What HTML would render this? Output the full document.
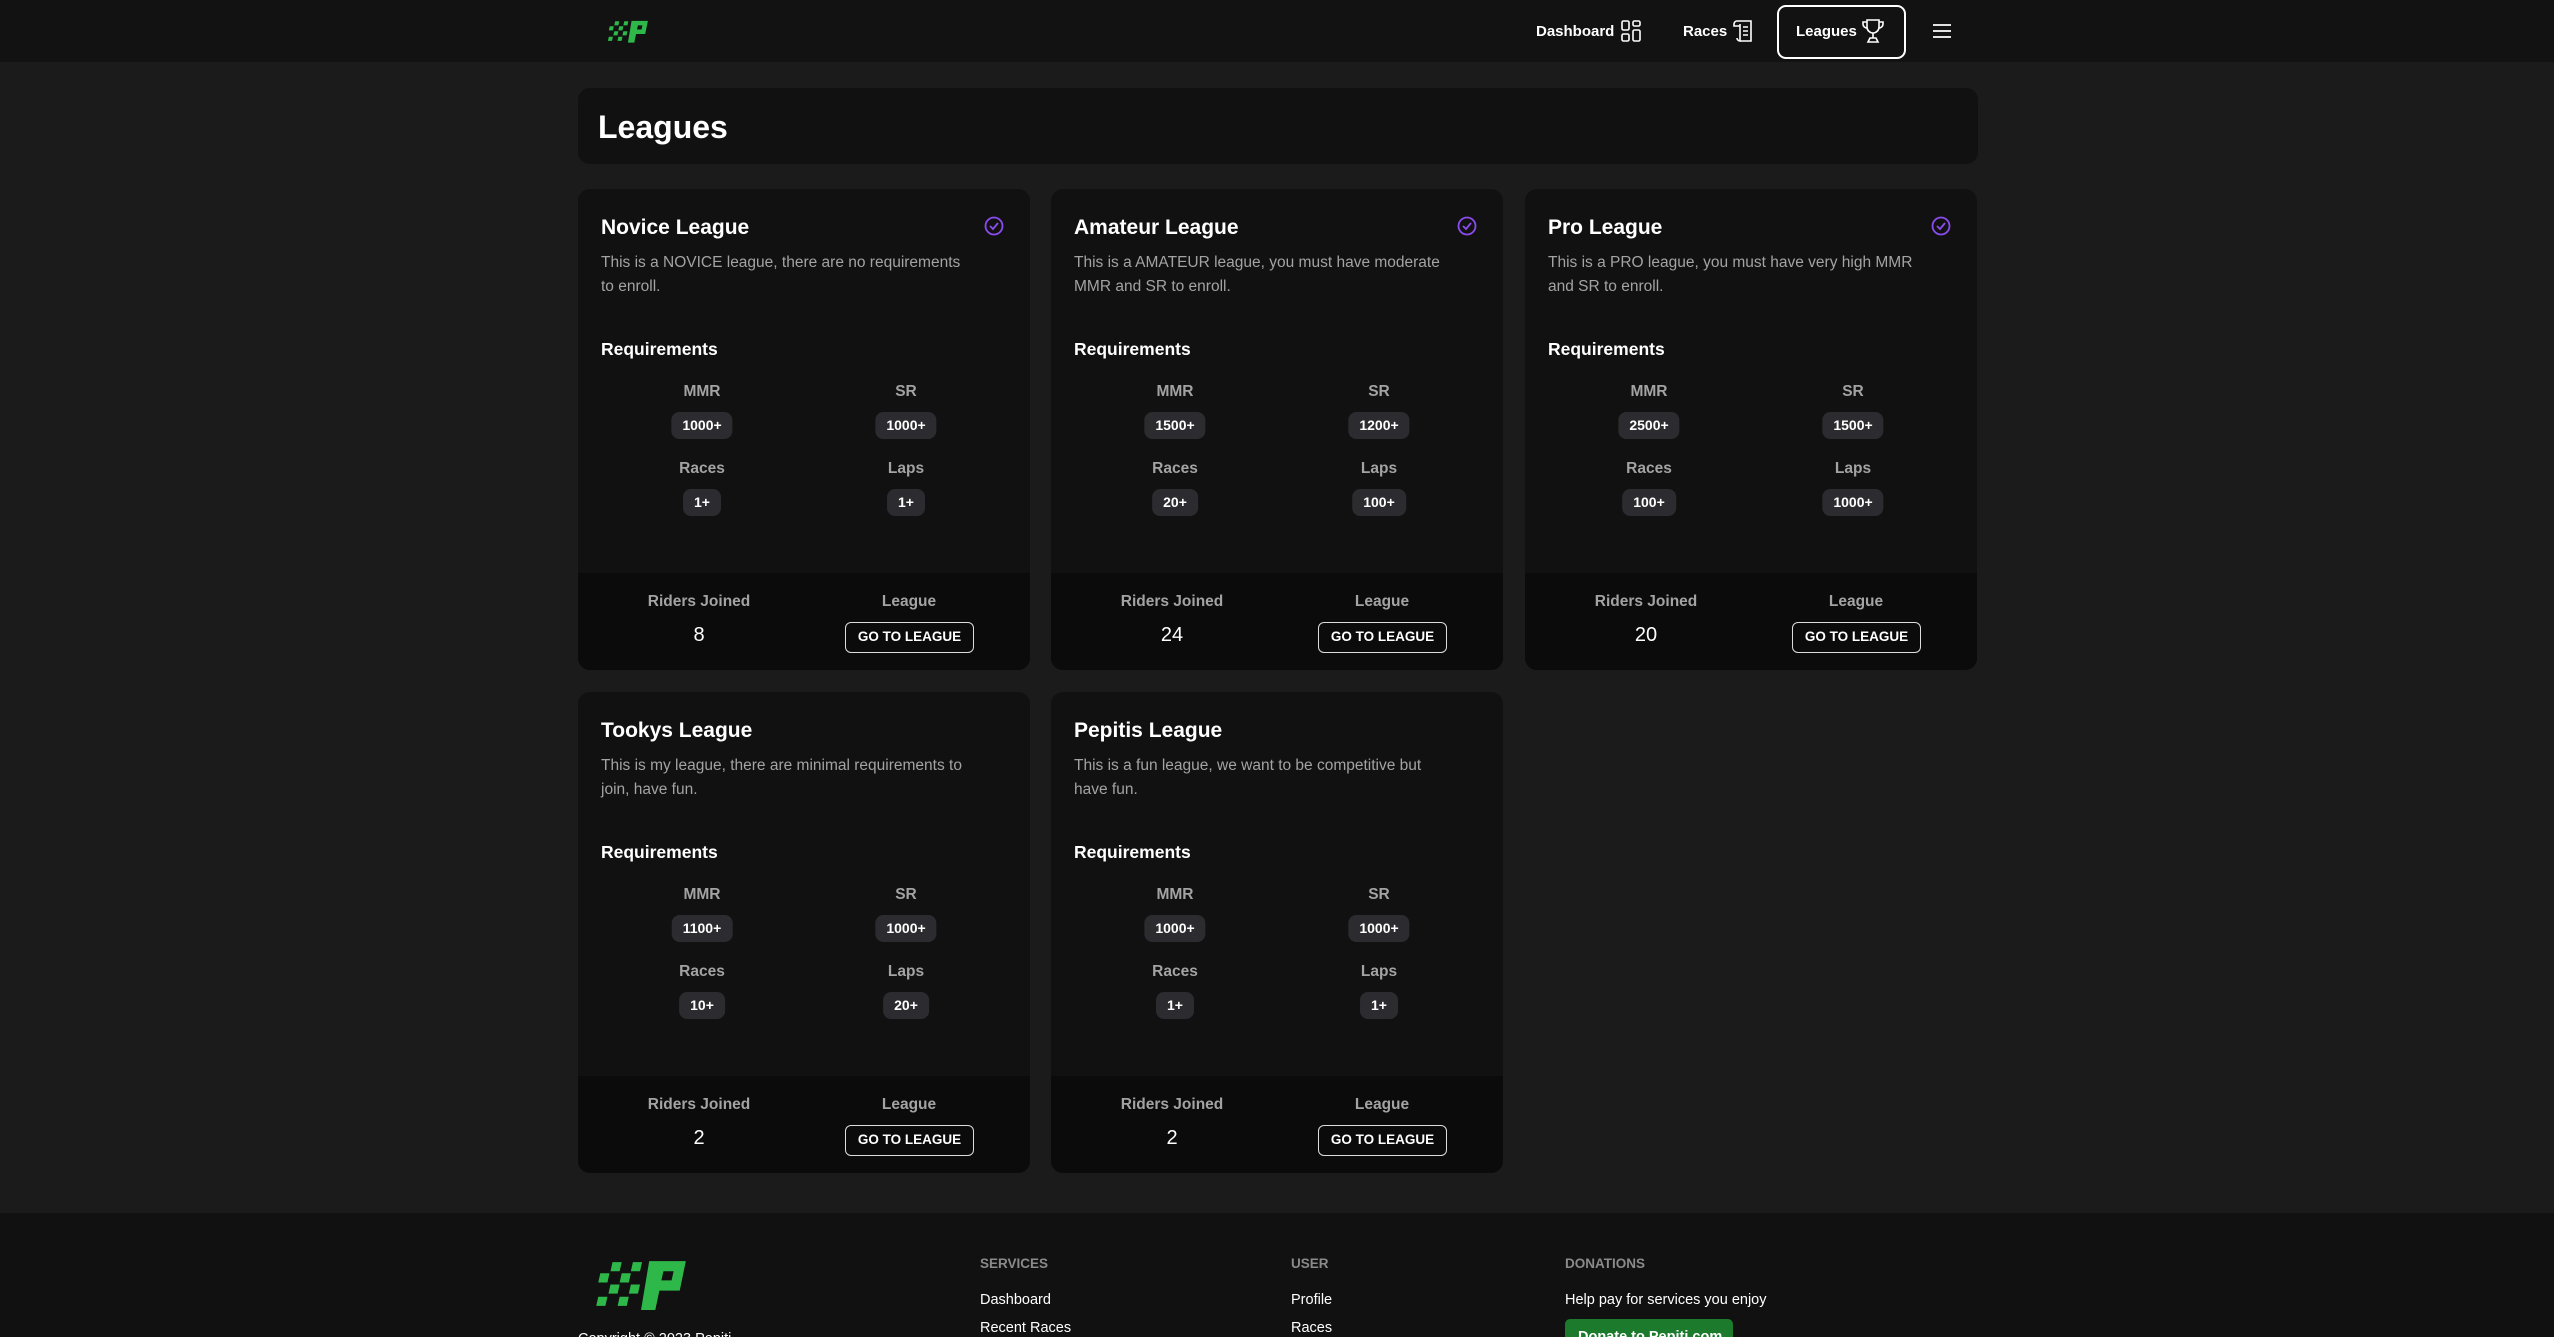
<!DOCTYPE html>
<html><head><meta charset="utf-8"><style>
*{margin:0;padding:0;box-sizing:border-box}
html,body{width:2554px;height:1337px;overflow:hidden}
body{background:#1b1b1b;font-family:"Liberation Sans",sans-serif;color:#fff;position:relative}
.abs{position:absolute}
.nav{left:0;top:0;width:2554px;height:62px;background:#121212}
.nl{font-size:15px;font-weight:bold;color:#fff}
.hdr{left:578px;top:88px;width:1400px;height:76px;background:#111;border-radius:12px}
.card{width:452px;height:481px;background:#111;border-radius:12px;overflow:hidden}
.card .ft{position:absolute;left:0;top:384px;width:100%;height:97px;background:#0b0b0b}
.t{position:absolute;left:23px;top:27px;font-size:21px;font-weight:bold}
.d{position:absolute;left:23px;top:62px;width:372px;font-size:15.5px;line-height:24px;color:#a3a3a3}
.rq{position:absolute;left:23px;top:150px;font-size:17.5px;font-weight:bold}
.lb{position:absolute;width:160px;text-align:center;font-size:15.5px;font-weight:bold;color:#a3a3a3;transform:translateX(-80px)}
.bd{position:absolute;transform:translateX(-50%);background:#2c2c30;border-radius:8px;height:27px;line-height:27px;padding:0 11px;font-size:14px;font-weight:bold}
.num{position:absolute;transform:translateX(-50%);font-size:20px}
.btn{position:absolute;left:267px;top:433px;width:129px;height:31px;border:1.5px solid #ddd;border-radius:6px;text-align:center;line-height:28px;font-size:13.5px;font-weight:bold}
.chk{position:absolute;left:405px;top:26px}
.foot{left:0;top:1213px;width:2554px;height:200px;background:#111}
.fh{font-size:13.5px;font-weight:bold;color:#8a8a8a}
.fl{font-size:14.5px;color:#fff}
</style></head><body>
<div class="abs nav"></div>
<svg class="abs" style="left:604px;top:19px" width="46" height="25" viewBox="0 0 100 55"><g fill="#2fb84a"><path fill-rule="evenodd" d="M60 4H96L90 33H70L66 52H52ZM74 14L72 23H82L84 14Z"/><path d="M24 5h9l-2 9h-9zM44 5h9l-2 9h-9zM12 16h9l-2 9h-9zM33 16h9l-2 9h-9zM22 27h9l-2 9h-9zM42 27h9l-2 9h-9zM10 39h9l-2 9h-9zM31 39h9l-2 9h-9z"/></g></svg>
<div class="abs nl" style="left:1536px;top:23px">Dashboard</div>
<svg class="abs" style="left:1621px;top:20px" width="20" height="22" viewBox="0 0 20 22" fill="none" stroke="#fff" stroke-width="1.6"><rect x="1" y="1" width="7" height="9" rx="1.5"/><rect x="12" y="1" width="7" height="5" rx="1.5"/><rect x="1" y="14" width="7" height="7" rx="1.5"/><rect x="12" y="10" width="7" height="11" rx="1.5"/></svg>
<div class="abs nl" style="left:1683px;top:23px">Races</div>
<svg class="abs" style="left:1733px;top:19px" width="22" height="24" viewBox="0 0 22 24" fill="none" stroke="#fff" stroke-width="1.6"><path d="M4 2h14v20H7"/><path d="M4 2a3 3 0 0 0-3 3v2h6"/><path d="M7 5v17a3 3 0 0 1-3-3"/><path d="M10 8h5M10 12h5M10 16h5"/></svg>
<div class="abs" style="left:1777px;top:5px;width:129px;height:54px;border:2px solid #fff;border-radius:9px"></div>
<div class="abs nl" style="left:1796px;top:23px">Leagues</div>
<svg class="abs" style="left:1862px;top:18px" width="22" height="26" viewBox="0 0 22 26" fill="none" stroke="#fff" stroke-width="1.6"><path d="M5 2h12v7a6 6 0 0 1-12 0z"/><path d="M5 4H1v2a4 4 0 0 0 4 4M17 4h4v2a4 4 0 0 1-4 4"/><path d="M11 15v5M6 24h10l-2-4H8z"/></svg>
<svg class="abs" style="left:1933px;top:23px" width="18" height="16" viewBox="0 0 18 16" stroke="#fff" stroke-width="1.8"><path d="M0 2h18M0 8h18M0 14h18"/></svg>

<div class="abs hdr"><div style="position:absolute;left:20px;top:21px;font-size:32px;font-weight:bold">Leagues</div></div>

<div class="abs card" style="left:578px;top:189px"><div class="ft"></div>
<div class="t">Novice League</div><svg class="chk" width="22" height="22" viewBox="0 0 22 22" fill="none" stroke="#8b4cf0" stroke-width="1.8"><circle cx="11" cy="11" r="8.5"/><path d="M7 11l3 3 5-6"/></svg>
<div class="d">This is a NOVICE league, there are no requirements to enroll.</div>
<div class="rq">Requirements</div>
<div class="lb" style="left:124px;top:194px">MMR</div><div class="lb" style="left:328px;top:194px">SR</div>
<div class="bd" style="left:124px;top:223px">1000+</div><div class="bd" style="left:328px;top:223px">1000+</div>
<div class="lb" style="left:124px;top:271px">Races</div><div class="lb" style="left:328px;top:271px">Laps</div>
<div class="bd" style="left:124px;top:300px">1+</div><div class="bd" style="left:328px;top:300px">1+</div>
<div class="lb" style="left:121px;top:404px">Riders Joined</div><div class="lb" style="left:331px;top:404px">League</div>
<div class="num" style="left:121px;top:435px">8</div><div class="btn">GO TO LEAGUE</div></div>

<div class="abs card" style="left:1051px;top:189px"><div class="ft"></div>
<div class="t">Amateur League</div><svg class="chk" width="22" height="22" viewBox="0 0 22 22" fill="none" stroke="#8b4cf0" stroke-width="1.8"><circle cx="11" cy="11" r="8.5"/><path d="M7 11l3 3 5-6"/></svg>
<div class="d">This is a AMATEUR league, you must have moderate MMR and SR to enroll.</div>
<div class="rq">Requirements</div>
<div class="lb" style="left:124px;top:194px">MMR</div><div class="lb" style="left:328px;top:194px">SR</div>
<div class="bd" style="left:124px;top:223px">1500+</div><div class="bd" style="left:328px;top:223px">1200+</div>
<div class="lb" style="left:124px;top:271px">Races</div><div class="lb" style="left:328px;top:271px">Laps</div>
<div class="bd" style="left:124px;top:300px">20+</div><div class="bd" style="left:328px;top:300px">100+</div>
<div class="lb" style="left:121px;top:404px">Riders Joined</div><div class="lb" style="left:331px;top:404px">League</div>
<div class="num" style="left:121px;top:435px">24</div><div class="btn">GO TO LEAGUE</div></div>

<div class="abs card" style="left:1525px;top:189px"><div class="ft"></div>
<div class="t">Pro League</div><svg class="chk" width="22" height="22" viewBox="0 0 22 22" fill="none" stroke="#8b4cf0" stroke-width="1.8"><circle cx="11" cy="11" r="8.5"/><path d="M7 11l3 3 5-6"/></svg>
<div class="d">This is a PRO league, you must have very high MMR and SR to enroll.</div>
<div class="rq">Requirements</div>
<div class="lb" style="left:124px;top:194px">MMR</div><div class="lb" style="left:328px;top:194px">SR</div>
<div class="bd" style="left:124px;top:223px">2500+</div><div class="bd" style="left:328px;top:223px">1500+</div>
<div class="lb" style="left:124px;top:271px">Races</div><div class="lb" style="left:328px;top:271px">Laps</div>
<div class="bd" style="left:124px;top:300px">100+</div><div class="bd" style="left:328px;top:300px">1000+</div>
<div class="lb" style="left:121px;top:404px">Riders Joined</div><div class="lb" style="left:331px;top:404px">League</div>
<div class="num" style="left:121px;top:435px">20</div><div class="btn">GO TO LEAGUE</div></div>

<div class="abs card" style="left:578px;top:692px"><div class="ft"></div>
<div class="t">Tookys League</div>
<div class="d">This is my league, there are minimal requirements to join, have fun.</div>
<div class="rq">Requirements</div>
<div class="lb" style="left:124px;top:194px">MMR</div><div class="lb" style="left:328px;top:194px">SR</div>
<div class="bd" style="left:124px;top:223px">1100+</div><div class="bd" style="left:328px;top:223px">1000+</div>
<div class="lb" style="left:124px;top:271px">Races</div><div class="lb" style="left:328px;top:271px">Laps</div>
<div class="bd" style="left:124px;top:300px">10+</div><div class="bd" style="left:328px;top:300px">20+</div>
<div class="lb" style="left:121px;top:404px">Riders Joined</div><div class="lb" style="left:331px;top:404px">League</div>
<div class="num" style="left:121px;top:435px">2</div><div class="btn">GO TO LEAGUE</div></div>

<div class="abs card" style="left:1051px;top:692px"><div class="ft"></div>
<div class="t">Pepitis League</div>
<div class="d">This is a fun league, we want to be competitive but have fun.</div>
<div class="rq">Requirements</div>
<div class="lb" style="left:124px;top:194px">MMR</div><div class="lb" style="left:328px;top:194px">SR</div>
<div class="bd" style="left:124px;top:223px">1000+</div><div class="bd" style="left:328px;top:223px">1000+</div>
<div class="lb" style="left:124px;top:271px">Races</div><div class="lb" style="left:328px;top:271px">Laps</div>
<div class="bd" style="left:124px;top:300px">1+</div><div class="bd" style="left:328px;top:300px">1+</div>
<div class="lb" style="left:121px;top:404px">Riders Joined</div><div class="lb" style="left:331px;top:404px">League</div>
<div class="num" style="left:121px;top:435px">2</div><div class="btn">GO TO LEAGUE</div></div>

<div class="abs foot"></div>
<svg class="abs" style="left:588px;top:1257px" width="102" height="56" viewBox="0 0 100 55"><g fill="#2fb84a"><path fill-rule="evenodd" d="M60 4H96L90 33H70L66 52H52ZM74 14L72 23H82L84 14Z"/><path d="M24 5h9l-2 9h-9zM44 5h9l-2 9h-9zM12 16h9l-2 9h-9zM33 16h9l-2 9h-9zM22 27h9l-2 9h-9zM42 27h9l-2 9h-9zM10 39h9l-2 9h-9zM31 39h9l-2 9h-9z"/></g></svg>
<div class="abs fl" style="left:578px;top:1331px">Copyright © 2023 Pepiti</div>
<div class="abs fh" style="left:980px;top:1256px">SERVICES</div>
<div class="abs fl" style="left:980px;top:1292px">Dashboard</div>
<div class="abs fl" style="left:980px;top:1320px">Recent Races</div>
<div class="abs fh" style="left:1291px;top:1256px">USER</div>
<div class="abs fl" style="left:1291px;top:1292px">Profile</div>
<div class="abs fl" style="left:1291px;top:1320px">Races</div>
<div class="abs fh" style="left:1565px;top:1256px">DONATIONS</div>
<div class="abs fl" style="left:1565px;top:1292px">Help pay for services you enjoy</div>
<div class="abs" style="left:1565px;top:1319px;width:168px;height:34px;background:#1c7a2c;border-radius:5px;font-size:14.5px;font-weight:bold;padding:10px 0 0 13px">Donate to Pepiti.com</div>
</body></html>
